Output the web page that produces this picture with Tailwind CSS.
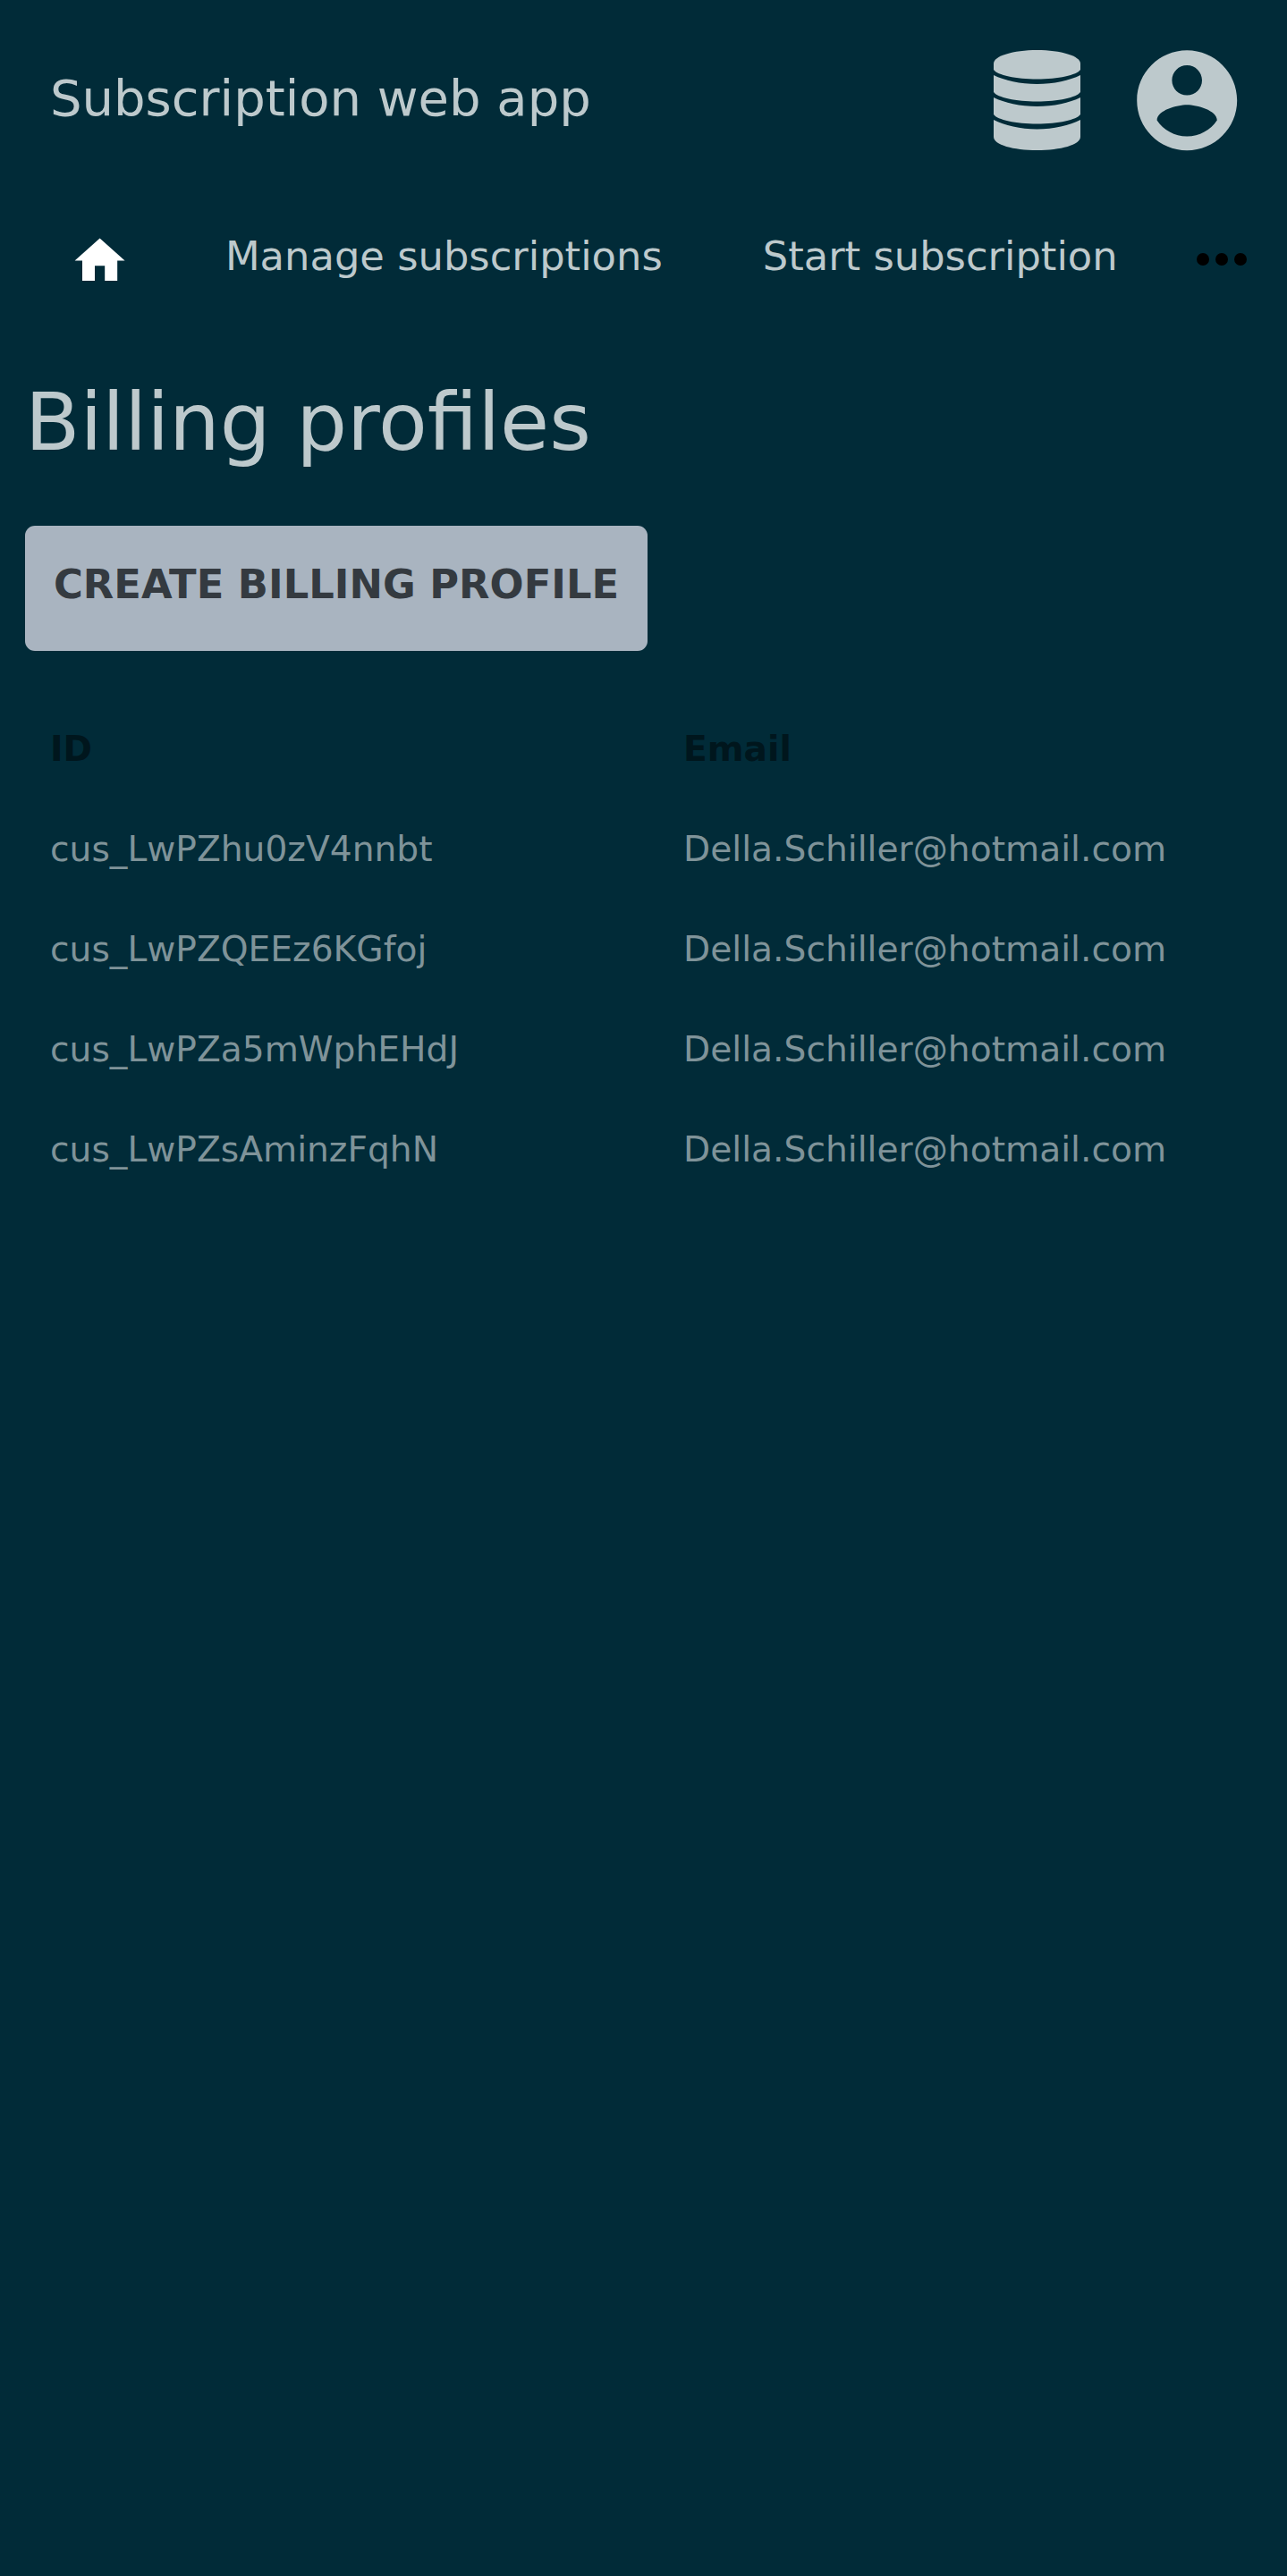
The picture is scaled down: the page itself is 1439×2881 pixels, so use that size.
<!DOCTYPE html>
<html lang="en">
  <head>
    <meta charset="UTF-8" />
    <script src="https://cdn.jsdelivr.net/npm/@tailwindcss/browser@4"></script>
    <title>Subscription web app</title>
  </head>
  <body class="bg-[#012b38] min-h-[2881px] font-['DejaVu_Sans',sans-serif]">
    <header class="flex items-center justify-between h-[224px] pl-[56px] pr-[45px]">
      <span class="text-[56px] text-[#bdc9cc] -mt-[4px]">Subscription web app</span>
      <div class="flex items-center gap-[52px]">
        <svg class="w-[97px] h-[112px] fill-[#bdc9cc]" viewBox="0 0 97 112">
          <path d="M0 15C0 6.7 21.7 0 48.5 0S97 6.7 97 15V22C93 28 72 32.5 48.5 32.5S4 28 0 22Z" />
          <path d="M0 28C12 34 30 38 48.5 38S85 34 97 28V47C93 53 72 57.5 48.5 57.5S4 53 0 47Z" />
          <path d="M0 53C12 59 30 63 48.5 63S85 59 97 53V72C93 78 72 82.5 48.5 82.5S4 78 0 72Z" />
          <path d="M0 78C12 84 30 88.5 48.5 88.5S85 84 97 78V97C97 106 75 112 48.5 112S0 106 0 97Z" />
        </svg>
        <svg class="w-[134.4px] h-[134.4px] fill-[#bdc9cc]" viewBox="0 0 24 24">
          <path d="M12 2C6.48 2 2 6.48 2 12s4.48 10 10 10 10-4.48 10-10S17.52 2 12 2zm0 3c1.66 0 3 1.34 3 3s-1.34 3-3 3-3-1.34-3-3 1.34-3 3-3zm0 14.2c-2.5 0-4.71-1.28-6-3.22.03-1.99 4-3.08 6-3.08 1.99 0 5.97 1.09 6 3.08-1.29 1.94-3.5 3.22-6 3.22z" />
        </svg>
      </div>
    </header>
    <nav class="flex items-center h-[126px] text-[44.8px] text-[#bdc9cc]">
      <svg class="ml-[78.4px] mt-[10px] w-[67.2px] h-[67.2px] fill-white" viewBox="0 0 24 24">
        <path d="M10 20v-6h4v6h5v-8h3L12 3 2 12h3v8z" />
      </svg>
      <span class="ml-[106.4px]">Manage subscriptions</span>
      <span class="ml-[112px]">Start subscription</span>
      <div class="ml-auto mr-[45px] mt-[6px] flex gap-[7px]">
        <span class="w-[14px] h-[14px] rounded-full bg-black"></span>
        <span class="w-[14px] h-[14px] rounded-full bg-black"></span>
        <span class="w-[14px] h-[14px] rounded-full bg-black"></span>
      </div>
    </nav>
    <main class="px-[28px]">
      <h1 class="mt-[66px] text-[89.6px] leading-[112px] text-[#bdc9cc]">Billing profiles</h1>
      <button class="mt-[60px] h-[140px] w-[696px] rounded-[11px] bg-[#a9b4c0] text-[44.8px] font-bold text-[#343a40] pb-[8px]">CREATE BILLING PROFILE</button>
      <div class="mt-[54px] grid grid-cols-[708px_1fr] pl-[28px] text-[39.2px] text-[#7f9399] [&>*]:h-[112px] [&>*]:flex [&>*]:items-center">
        <div class="font-bold text-[#00161d]">ID</div>
        <div class="font-bold text-[#00161d]">Email</div>
        <div>cus_LwPZhu0zV4nnbt</div>
        <div>Della.Schiller@hotmail.com</div>
        <div>cus_LwPZQEEz6KGfoj</div>
        <div>Della.Schiller@hotmail.com</div>
        <div>cus_LwPZa5mWphEHdJ</div>
        <div>Della.Schiller@hotmail.com</div>
        <div>cus_LwPZsAminzFqhN</div>
        <div>Della.Schiller@hotmail.com</div>
      </div>
    </main>
  </body>
</html>
